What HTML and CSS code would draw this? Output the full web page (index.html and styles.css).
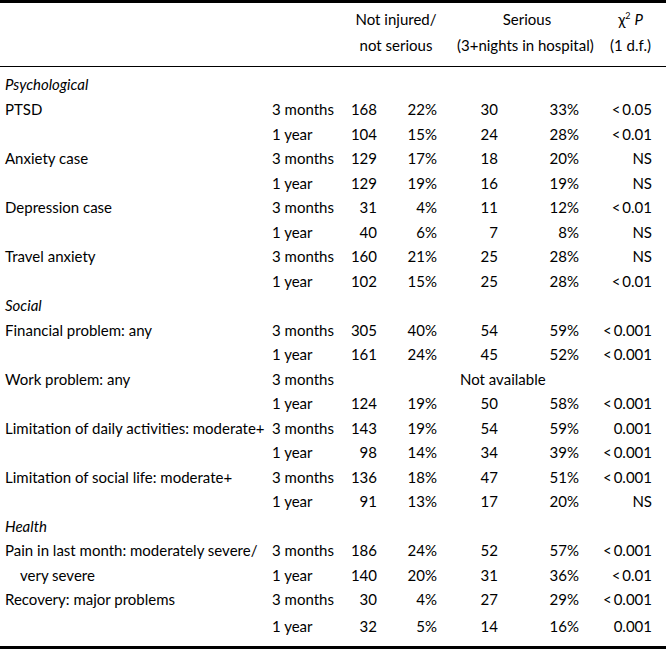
FILE: index.html
```html
<!DOCTYPE html>
<html>
<head>
<meta charset="utf-8">
<link rel="stylesheet" href="styles.css">
</head>
<body>
<table class="tbl">
  <colgroup>
    <col class="c-label"><col class="c-time"><col class="c-n1"><col class="c-p1"><col class="c-n2"><col class="c-p2"><col class="c-chi">
  </colgroup>
  <thead>
    <tr class="hrow1">
      <th></th><th></th>
      <th colspan="2" class="hc g1">Not injured/</th>
      <th colspan="2" class="hc g2">Serious</th>
      <th class="hchi">χ<sup>2</sup> <i>P</i></th>
    </tr>
    <tr class="hrow2">
      <th></th><th></th>
      <th colspan="2" class="hc g1">not serious</th>
      <th colspan="2" class="g2b">(3+nights in hospital)</th>
      <th class="hchi">(1 d.f.)</th>
    </tr>
  </thead>
  <tbody>
    <tr class="sec first"><td colspan="7"><i>Psychological</i></td></tr>
    <tr><td>PTSD</td><td>3 months</td><td>168</td><td>22%</td><td>30</td><td>33%</td><td>&lt;&#8201;0.05</td></tr>
    <tr><td></td><td>1 year</td><td>104</td><td>15%</td><td>24</td><td>28%</td><td>&lt;&#8201;0.01</td></tr>
    <tr><td>Anxiety case</td><td>3 months</td><td>129</td><td>17%</td><td>18</td><td>20%</td><td>NS</td></tr>
    <tr><td></td><td>1 year</td><td>129</td><td>19%</td><td>16</td><td>19%</td><td>NS</td></tr>
    <tr><td>Depression case</td><td>3 months</td><td>31</td><td>4%</td><td>11</td><td>12%</td><td>&lt;&#8201;0.01</td></tr>
    <tr><td></td><td>1 year</td><td>40</td><td>6%</td><td>7</td><td>8%</td><td>NS</td></tr>
    <tr><td>Travel anxiety</td><td>3 months</td><td>160</td><td>21%</td><td>25</td><td>28%</td><td>NS</td></tr>
    <tr><td></td><td>1 year</td><td>102</td><td>15%</td><td>25</td><td>28%</td><td>&lt;&#8201;0.01</td></tr>
    <tr class="sec"><td colspan="7"><i>Social</i></td></tr>
    <tr><td>Financial problem: any</td><td>3 months</td><td>305</td><td>40%</td><td>54</td><td>59%</td><td>&lt;&#8201;0.001</td></tr>
    <tr><td></td><td>1 year</td><td>161</td><td>24%</td><td>45</td><td>52%</td><td>&lt;&#8201;0.001</td></tr>
    <tr><td>Work problem: any</td><td>3 months</td><td colspan="5" class="na">Not available</td></tr>
    <tr><td></td><td>1 year</td><td>124</td><td>19%</td><td>50</td><td>58%</td><td>&lt;&#8201;0.001</td></tr>
    <tr><td>Limitation of daily activities: moderate+</td><td>3 months</td><td>143</td><td>19%</td><td>54</td><td>59%</td><td>0.001</td></tr>
    <tr><td></td><td>1 year</td><td>98</td><td>14%</td><td>34</td><td>39%</td><td>&lt;&#8201;0.001</td></tr>
    <tr><td>Limitation of social life: moderate+</td><td>3 months</td><td>136</td><td>18%</td><td>47</td><td>51%</td><td>&lt;&#8201;0.001</td></tr>
    <tr><td></td><td>1 year</td><td>91</td><td>13%</td><td>17</td><td>20%</td><td>NS</td></tr>
    <tr class="sec"><td colspan="7"><i>Health</i></td></tr>
    <tr><td>Pain in last month: moderately severe/</td><td>3 months</td><td>186</td><td>24%</td><td>52</td><td>57%</td><td>&lt;&#8201;0.001</td></tr>
    <tr><td class="indent">very severe</td><td>1 year</td><td>140</td><td>20%</td><td>31</td><td>36%</td><td>&lt;&#8201;0.01</td></tr>
    <tr><td>Recovery: major problems</td><td>3 months</td><td>30</td><td>4%</td><td>27</td><td>29%</td><td>&lt;&#8201;0.001</td></tr>
    <tr class="last"><td></td><td>1 year</td><td>32</td><td>5%</td><td>14</td><td>16%</td><td>0.001</td></tr>
  </tbody>
</table>
</body>
</html>
```
FILE: styles.css
```css
html, body {
  margin: 0;
  padding: 0;
  background: #ffffff;
}
body {
  font-family: "Lato", "Open Sans", sans-serif;
  font-size: 15px;
  color: #000000;
}
.tbl {
  width: 666px;
  border-collapse: collapse;
  table-layout: fixed;
  border-top: 3px solid #000;
  border-bottom: 3px solid #000;
}
.c-label { width: 270px; }
.c-time { width: 70px; }
.c-n1 { width: 37px; }
.c-p1 { width: 60px; }
.c-n2 { width: 61px; }
.c-p2 { width: 81px; }
.c-chi { width: 87px; }

th {
  font-weight: normal;
  padding: 0;
  line-height: 16px;
  white-space: nowrap;
}
.hrow1 th { padding-top: 8px; height: 16px; }
.hrow2 th { padding-top: 10px; padding-bottom: 13px; border-bottom: 1px solid #000; height: 16px; }
.hc { text-align: center; }
.g1 { padding-left: 15px; }
.g2 { padding-left: 38px; }
.g2b { text-align: left; padding-left: 20px; }
.hchi { text-align: center; padding-left: 28px; padding-right: 12px; }
.hchi sup { font-size: 9px; line-height: 0; vertical-align: 6px; }

td {
  padding: 0;
  height: 24.5px;
  line-height: 16px;
  white-space: nowrap;
  text-align: right;
  vertical-align: middle;
}
td:nth-child(1) { text-align: left; padding-left: 5px; }
td:nth-child(2) { text-align: left; padding-left: 2px; }
td:nth-child(7) { padding-right: 14px; }
.sec td { text-align: left; padding-left: 5px; }
.sec.first td { height: 27px; padding-top: 3px; }
.indent { padding-left: 20px !important; }
.na { text-align: left !important; padding-left: 120px; }
.last td { height: 28px; padding-bottom: 6px; }
```
